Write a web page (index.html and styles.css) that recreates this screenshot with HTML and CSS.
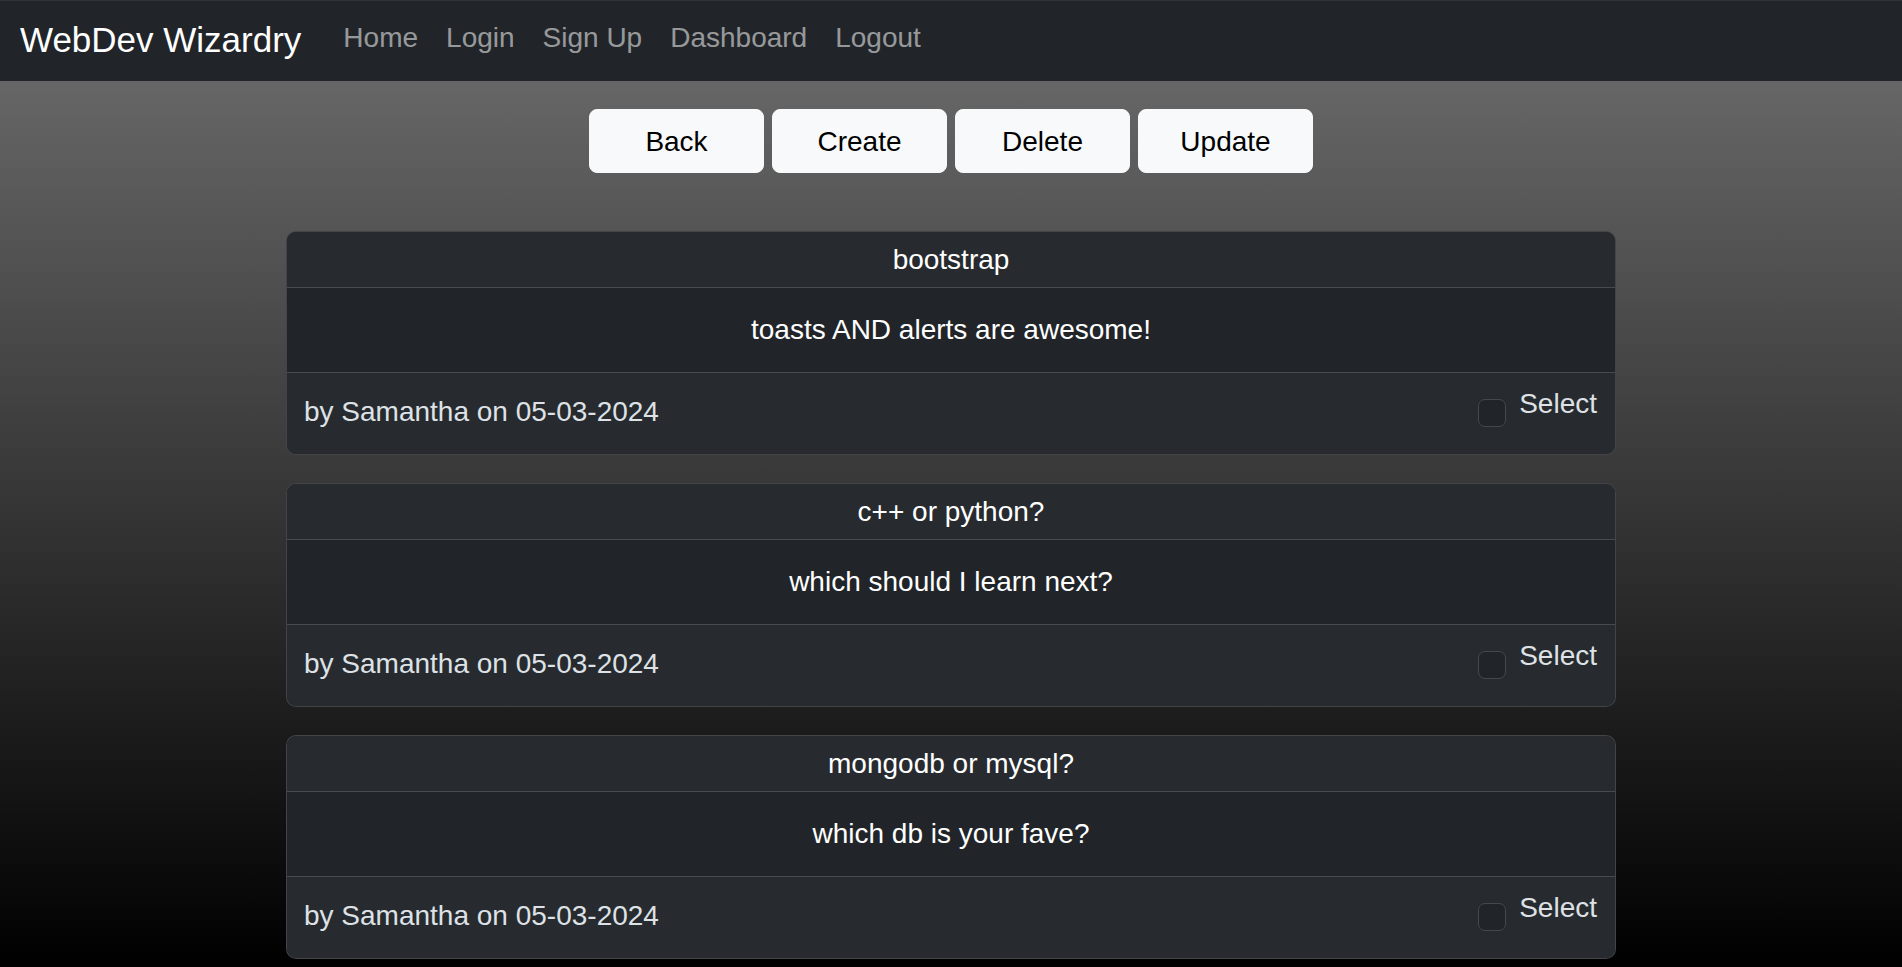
FILE: index.html
```html
<!DOCTYPE html>
<html lang="en">
<head>
<meta charset="utf-8">
<title>WebDev Wizardry</title>
<link rel="stylesheet" href="styles.css">
</head>
<body>
<nav class="navbar">
  <a class="brand" href="#">WebDev Wizardry</a>
  <ul class="nav">
    <li><a class="nav-link" href="#">Home</a></li>
    <li><a class="nav-link" href="#">Login</a></li>
    <li><a class="nav-link" href="#">Sign Up</a></li>
    <li><a class="nav-link" href="#">Dashboard</a></li>
    <li><a class="nav-link" href="#">Logout</a></li>
  </ul>
</nav>
<main class="main">
  <div class="actions">
    <button class="btn">Back</button>
    <button class="btn">Create</button>
    <button class="btn">Delete</button>
    <button class="btn">Update</button>
  </div>
  <div class="cards">
    <div class="card">
      <div class="card-header">bootstrap</div>
      <div class="card-body">toasts AND alerts are awesome!</div>
      <div class="card-footer">
        <span class="meta">by Samantha on 05-03-2024</span>
        <label class="check"><input type="checkbox" class="check-input"><span>Select</span></label>
      </div>
    </div>
    <div class="card">
      <div class="card-header">c++ or python?</div>
      <div class="card-body">which should I learn next?</div>
      <div class="card-footer">
        <span class="meta">by Samantha on 05-03-2024</span>
        <label class="check"><input type="checkbox" class="check-input"><span>Select</span></label>
      </div>
    </div>
    <div class="card">
      <div class="card-header">mongodb or mysql?</div>
      <div class="card-body">which db is your fave?</div>
      <div class="card-footer">
        <span class="meta">by Samantha on 05-03-2024</span>
        <label class="check"><input type="checkbox" class="check-input"><span>Select</span></label>
      </div>
    </div>
  </div>
</main>
</body>
</html>
```
FILE: styles.css
```css
* { box-sizing: border-box; }
html, body { margin: 0; padding: 0; }
body {
  font-family: "Liberation Sans", Arial, sans-serif;
  background: #000;
  color: #dee2e6;
  overflow: hidden;
  height: 100vh;
}
.navbar {
  height: 81px;
  background: #212529;
  border-top: 1px solid #303337;
  display: flex;
  align-items: flex-start;
  padding: 0 0 0 20px;
}
.brand {
  color: #fff;
  text-decoration: none;
  font-size: 35px;
  line-height: 52px;
  padding-top: 13px;
  margin-right: 28px;
  white-space: nowrap;
}
.nav {
  list-style: none;
  margin: 0;
  padding: 0;
  display: flex;
}
.nav-link {
  display: block;
  color: rgba(255, 255, 255, 0.55);
  text-decoration: none;
  font-size: 28px;
  line-height: 42px;
  padding: 16px 14px 0;
  white-space: nowrap;
}
.main {
  height: calc(100vh - 81px);
  overflow: hidden;
  background: linear-gradient(to bottom, #666666 0%, #000000 100%);
  padding-top: 28px;
}
.actions {
  display: flex;
  justify-content: center;
  gap: 8px;
}
.btn {
  width: 175px;
  height: 64px;
  background: #f8f9fa;
  border: 1px solid #f8f9fa;
  border-radius: 8px;
  color: #000;
  font-family: "Liberation Sans", Arial, sans-serif;
  font-size: 28px;
  line-height: 42px;
  padding: 2px 0 0;
}
.cards {
  width: 1330px;
  margin: 58px auto 0;
  display: flex;
  flex-direction: column;
  gap: 28px;
}
.card {
  background: #212529;
  border: 1px solid rgba(255, 255, 255, 0.15);
  border-radius: 10px;
  overflow: hidden;
}
.card-header {
  background: #272b2f;
  color: #fff;
  text-align: center;
  font-size: 28px;
  line-height: 42px;
  padding: 7px 28px 6px;
  border-bottom: 1px solid rgba(255, 255, 255, 0.15);
}
.card-body {
  background: #212529;
  color: #fff;
  text-align: center;
  font-size: 28px;
  line-height: 42px;
  padding: 21px 28px;
}
.card-footer {
  background: #272b2f;
  border-top: 1px solid rgba(255, 255, 255, 0.15);
  height: 82px;
  display: flex;
  justify-content: space-between;
  align-items: flex-start;
  padding: 0 18px 0 17px;
  font-size: 28px;
  line-height: 42px;
  color: #dee2e6;
}
.meta {
  margin-top: 18px;
}
.check {
  display: flex;
  align-items: flex-start;
  gap: 13px;
  margin-top: 10px;
}
.check-input {
  appearance: none;
  -webkit-appearance: none;
  margin: 16px 0 0;
  width: 28px;
  height: 28px;
  background: #212529;
  border: 1px solid #45484c;
  border-radius: 7px;
}
```
